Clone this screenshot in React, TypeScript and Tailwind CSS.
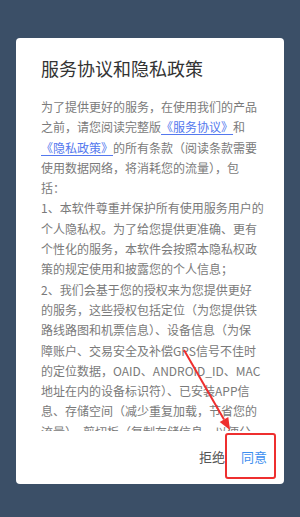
const lines: React.ReactNode[] = [
  "为了提供更好的服务，在使用我们的产品",
  <>
    之前，请您阅读完整版
    <span className="text-[#5478ee] underline underline-offset-2">《服务协议》</span>和
  </>,
  <>
    <span className="text-[#5478ee] underline underline-offset-2">《隐私政策》</span>
    的所有条款（阅读条款需要
  </>,
  "使用数据网络，将消耗您的流量），包",
  "括：",
  "1、本软件尊重并保护所有使用服务用户的",
  "个人隐私权。为了给您提供更准确、更有",
  "个性化的服务，本软件会按照本隐私权政",
  "策的规定使用和披露您的个人信息；",
  "2、我们会基于您的授权来为您提供更好",
  "的服务，这些授权包括定位（为您提供铁",
  "路线路图和机票信息）、设备信息（为保",
  "障账户、交易安全及补偿GPS信号不佳时",
  "的定位数据，OAID、ANDROID_ID、MAC",
  "地址在内的设备标识符）、已安装APP信",
  "息、存储空间（减少重复加载，节省您的",
  "流量）、剪切板（复制存储信息，以便分",
];

export default function App() {
  return (
    <div className="relative h-[517px] w-[300px] overflow-hidden bg-[#3b4f67] pt-[38px] font-['Noto_Sans_CJK_SC','Noto_Sans',sans-serif]">
      {/* Dialog */}
      <div className="mx-[16px] flex h-[446px] flex-col rounded-[4px] bg-white">
        <h1 className="pl-[25px] pt-[17px] text-[18px] leading-[26px] text-[#333]">
          服务协议和隐私政策
        </h1>

        {/* scrolling body, last line cut by the button bar */}
        <div className="mt-[16px] h-[334px] overflow-hidden pl-[25px] text-[12px] leading-[20.3px] text-[#7a7a7a]">
          {lines.map((l, i) => (
            <div key={i} className="whitespace-nowrap">
              {l}
            </div>
          ))}
        </div>

        <div className="flex h-[52px] items-center justify-end gap-[16px] pr-[17px] text-[13px]">
          <button className="text-[#555]">拒绝</button>
          <button className="text-[#3d8ff0]">同意</button>
        </div>
      </div>

      {/* Annotation */}
      <div className="absolute left-[225px] top-[433px] h-[46px] w-[51px] rounded-[3px] border-2 border-[#ee2f2f]" />
      <svg className="absolute left-0 top-0" width="300" height="517">
        <line x1="184" y1="350" x2="224" y2="419.6" stroke="#ee2f2f" strokeWidth="2" />
        <polygon points="230,430 228.3,417.1 219.7,422.1" fill="#ee2f2f" />
      </svg>
    </div>
  );
}
